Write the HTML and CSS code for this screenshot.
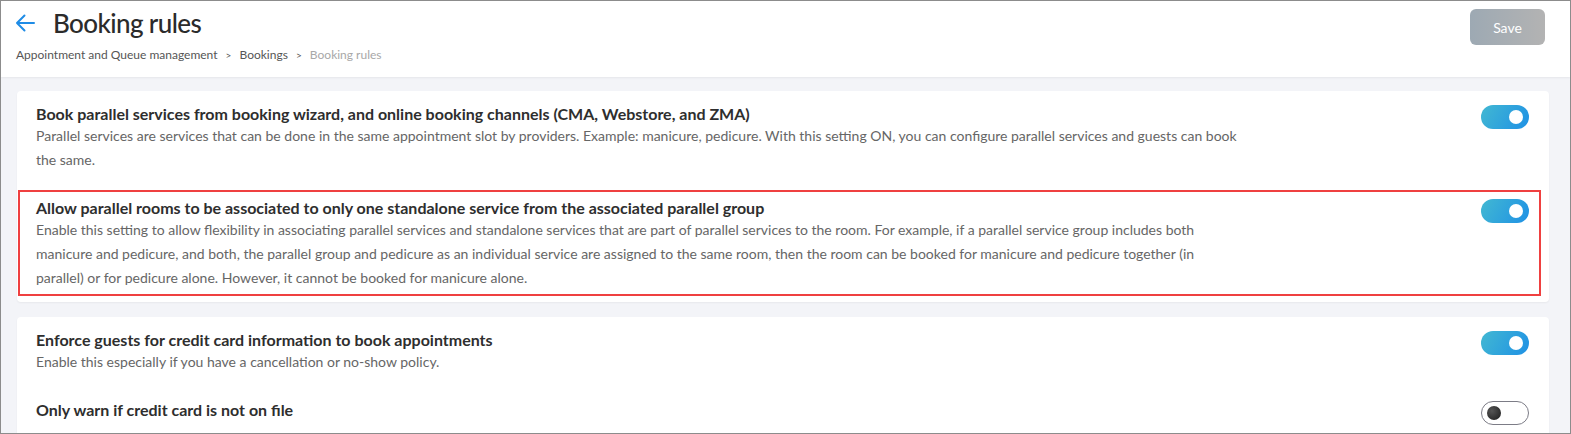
FILE: index.html
```html
<!DOCTYPE html>
<html lang="en">
<head>
    <meta charset="UTF-8">
    <meta name="viewport" content="width=device-width, initial-scale=1.0">
    <title>Booking rules</title>
    <link rel="stylesheet" href="styles.css">
</head>
<body>
    <div class="frame">
        <header class="page-header">
            <div class="heading">
                <div class="title-row">
                    <a class="back" href="#">
                        <svg width="20" height="20" viewBox="0 0 20 20">
                            <path d="M19 10H2M9.5 2.5L2 10l7.5 7.5" fill="none" stroke="#1f8ce6" stroke-width="2" stroke-linecap="round" stroke-linejoin="round"/>
                        </svg>
                    </a>
                    <h1>Booking rules</h1>
                </div>
                <div class="breadcrumb">
                    <span>Appointment and Queue management</span>
                    <span class="sep">&gt;</span>
                    <span>Bookings</span>
                    <span class="sep">&gt;</span>
                    <span class="current">Booking rules</span>
                </div>
            </div>
            <button class="save" disabled>Save</button>
        </header>

        <main class="content">
            <section class="card">
                <div class="rule">
                    <div class="rule-text">
                        <div class="rule-title">Book parallel services from booking wizard, and online booking channels (CMA, Webstore, and ZMA)</div>
                        <div class="rule-desc">Parallel services are services that can be done in the same appointment slot by providers. Example: manicure, pedicure. With this setting ON, you can configure parallel services and guests can book the same.</div>
                    </div>
                    <span class="toggle on"></span>
                </div>
                <div class="rule highlight">
                    <div class="rule-text">
                        <div class="rule-title">Allow parallel rooms to be associated to only one standalone service from the associated parallel group</div>
                        <div class="rule-desc">Enable this setting to allow flexibility in associating parallel services and standalone services that are part of parallel services to the room. For example, if a parallel service group includes both manicure and pedicure, and both, the parallel group and pedicure as an individual service are assigned to the same room, then the room can be booked for manicure and pedicure together (in parallel) or for pedicure alone. However, it cannot be booked for manicure alone.</div>
                    </div>
                    <span class="toggle on"></span>
                </div>
            </section>

            <section class="card">
                <div class="rule">
                    <div class="rule-text">
                        <div class="rule-title">Enforce guests for credit card information to book appointments</div>
                        <div class="rule-desc">Enable this especially if you have a cancellation or no-show policy.</div>
                    </div>
                    <span class="toggle on"></span>
                </div>
                <div class="rule">
                    <div class="rule-text">
                        <div class="rule-title">Only warn if credit card is not on file</div>
                    </div>
                    <span class="toggle"></span>
                </div>
            </section>
        </main>
    </div>
</body>
</html>
```

FILE: styles.css
```css
html, body {
    margin: 0;
    padding: 0;
}
body {
    font-family: Lato, "Noto Sans", sans-serif;
    color: #333;
}
.frame {
    height: 434px;
    box-sizing: border-box;
    border: 1px solid #8c8c8c;
    overflow: hidden;
    display: flex;
    flex-direction: column;
    background: #f3f4f8;
}
.page-header {
    flex: none;
    display: flex;
    justify-content: space-between;
    align-items: flex-start;
    height: 76px;
    box-sizing: border-box;
    padding: 7px 25px 0 14px;
    background: #fff;
    box-shadow: 0 1px 2px rgba(0, 0, 0, 0.06);
}
.title-row {
    display: flex;
    align-items: center;
    height: 30px;
}
.back {
    display: flex;
    margin-right: 18px;
}
h1 {
    margin: 0;
    font-size: 26px;
    font-weight: 500;
    letter-spacing: -0.6px;
    line-height: 30px;
    color: #2b2b2b;
}
.breadcrumb {
    margin-top: 10px;
    margin-left: 1px;
    font-size: 12px;
    line-height: 14px;
    color: #555;
}
.breadcrumb .sep {
    margin: 0 5px;
    font-size: 10px;
}
.breadcrumb .current {
    color: #a8a8a8;
}
.save {
    width: 75px;
    height: 36px;
    margin-top: 1px;
    border: none;
    border-radius: 6px;
    background: linear-gradient(90deg, #9da9b3, #b3b3b3);
    color: #fff;
    font-family: Lato, sans-serif;
    font-size: 14px;
}
.content {
    flex: none;
    padding: 14px 21px 0 16px;
}
.card {
    background: #fff;
    border-radius: 4px;
    box-shadow: 0 1px 2px rgba(0, 0, 0, 0.05);
    padding: 5px 8px 6px 1px;
    margin-bottom: 15px;
}
.rule {
    display: flex;
    justify-content: space-between;
    align-items: flex-start;
    border: 2px solid transparent;
    padding: 6px 10px 4px 16px;
    margin-bottom: 12px;
}
.rule:last-child {
    margin-bottom: 0;
}
.rule.highlight {
    border-color: #ef4040;
}
.rule-text {
    max-width: 1205px;
}
.rule-title {
    font-size: 16px;
    font-weight: 700;
    line-height: 20px;
    color: #2e2e2e;
}
.rule-desc {
    font-size: 14px;
    line-height: 24px;
    color: #666;
}
.toggle {
    flex: none;
    position: relative;
    width: 48px;
    height: 24px;
    box-sizing: border-box;
    border-radius: 12px;
    border: 1px solid #7c7c86;
    background: #fff;
    margin-top: 1px;
}
.toggle::after {
    content: "";
    position: absolute;
    top: 4px;
    left: 5px;
    width: 14px;
    height: 14px;
    border-radius: 50%;
    background: radial-gradient(circle at 35% 35%, #555, #1a1a1a);
}
.toggle.on {
    border: none;
    background: linear-gradient(120deg, #42b8d2, #1f91e5);
}
.toggle.on::after {
    top: 5px;
    left: auto;
    right: 6px;
    background: #fff;
}
```
